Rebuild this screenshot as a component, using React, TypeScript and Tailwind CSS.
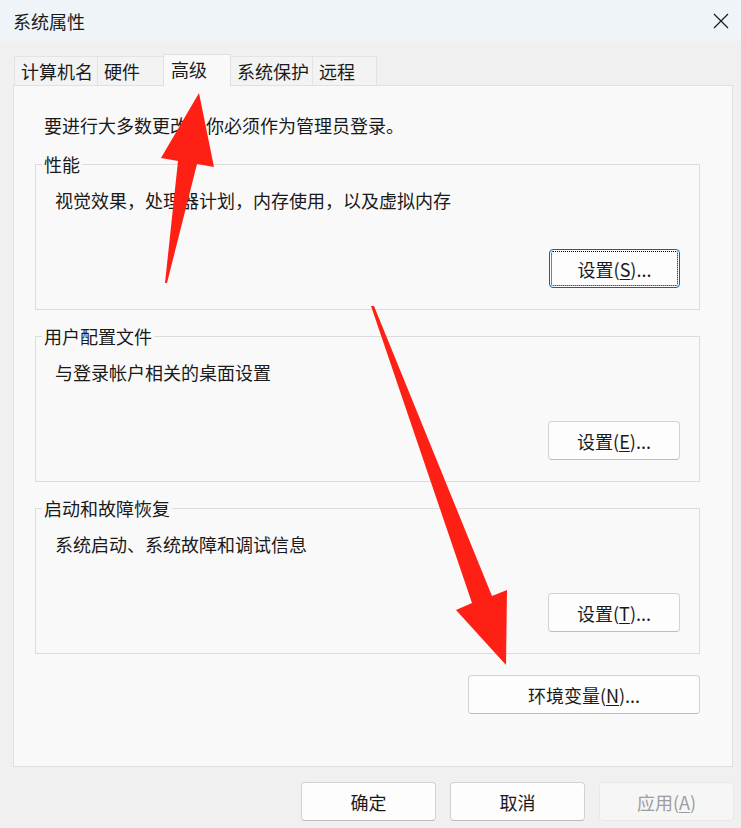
import type { ReactNode } from 'react'

function Btn({
  children,
  className,
  focused,
  disabled,
}: {
  children: ReactNode
  className: string
  focused?: boolean
  disabled?: boolean
}) {
  if (focused) {
    return (
      <button className={`h-[39px] rounded-[4px] border border-[#0067c0] bg-[#fdfdfd] p-px text-[18px] text-[#1a1a1a] ${className}`}>
        <div className="flex h-full w-full items-center justify-center rounded-[2px] border border-dotted border-black leading-[20px]">
          {children}
        </div>
      </button>
    )
  }
  return (
    <button
      disabled={disabled}
      className={`flex h-[39px] items-center justify-center rounded-[4px] border text-[18px] leading-[20px] ${
        disabled
          ? 'border-[#e8e8e8] bg-[#f6f6f6] text-[#9d9d9d]'
          : 'border-[#d2d2d2] border-b-[#bdbdbd] bg-[#fdfdfd] text-[#1a1a1a]'
      } ${className}`}
    >
      {children}
    </button>
  )
}

function Group({ title, desc, children }: { title: string; desc: string; children: ReactNode }) {
  return (
    <fieldset className="border border-[#dcdcdc] p-0">
      <legend className="ml-[6px] px-[2px] leading-[20px]">{title}</legend>
      <div className="px-[19px] pb-[21px]">
        <p className="mt-[16px] leading-[20px]">{desc}</p>
        <div className="mt-[39px] flex justify-end">{children}</div>
      </div>
    </fieldset>
  )
}

const tabs = [
  { label: '计算机名', w: 'w-[84px]' },
  { label: '硬件', w: 'w-[67px]' },
  { label: '高级', w: 'w-[68px]', active: true },
  { label: '系统保护', w: 'w-[83px]' },
  { label: '远程', w: 'w-[65px]' },
]

export default function App() {
  return (
    <div className="relative h-[828px] w-[741px] overflow-hidden bg-[#f0f0f0] text-[18px] text-[#1a1a1a] [font-family:'Noto_Sans_CJK_SC','Noto_Sans',sans-serif]">
      {/* title bar */}
      <div className="flex h-[41px] items-center justify-between bg-[#eef4f8] pl-[13px] pr-[12px]">
        <span className="leading-[20px]">系统属性</span>
        <svg width="16" height="16" viewBox="0 0 16 16" className="text-[#1a1a1a]">
          <path d="M1 1 L15 15 M15 1 L1 15" stroke="currentColor" strokeWidth="1.2" fill="none" />
        </svg>
      </div>

      <div className="px-[13px] pt-[13px]">
        {/* tabs */}
        <div className="flex items-end pl-px">
          {tabs.map((t) =>
            t.active ? (
              <div
                key={t.label}
                className={`relative z-10 -mb-px -mr-px flex h-[32px] items-center border border-b-0 border-[#e0e0e0] bg-[#f9f9f9] pl-[7px] pb-[3px] leading-[20px] ${t.w}`}
              >
                {t.label}
              </div>
            ) : (
              <div
                key={t.label}
                className={`-mr-px flex h-[29px] items-center border border-b-0 border-[#e3e3e3] bg-[#f3f3f3] pl-[6px] leading-[20px] ${t.w}`}
              >
                {t.label}
              </div>
            ),
          )}
        </div>

        {/* panel */}
        <div className="flex h-[682px] w-[720px] flex-col border border-[#e0e0e0] bg-[#f9f9f9] pl-[21px] pr-[32px] pt-[29px]">
          <p className="pl-[9px] leading-[20px]">要进行大多数更改，你必须作为管理员登录。</p>
          <div className="mt-[19px] flex flex-col gap-[16px]">
            <Group title="性能" desc="视觉效果，处理器计划，内存使用，以及虚拟内存">
              <Btn focused className="w-[131px]">
                设置(<span className="underline underline-offset-2">S</span>)...
              </Btn>
            </Group>
            <Group title="用户配置文件" desc="与登录帐户相关的桌面设置">
              <Btn className="w-[132px]">
                设置(<span className="underline underline-offset-2">E</span>)...
              </Btn>
            </Group>
            <Group title="启动和故障恢复" desc="系统启动、系统故障和调试信息">
              <Btn className="w-[132px]">
                设置(<span className="underline underline-offset-2">T</span>)...
              </Btn>
            </Group>
          </div>
          <div className="mt-[21px] flex justify-end">
            <Btn className="w-[232px]">
              环境变量(<span className="underline underline-offset-2">N</span>)...
            </Btn>
          </div>
        </div>
      </div>

      {/* dialog buttons */}
      <div className="mt-[15px] flex justify-end gap-[14px] pr-[7px]">
        <Btn className="w-[135px]">确定</Btn>
        <Btn className="w-[135px]">取消</Btn>
        <Btn disabled className="w-[135px]">
          应用(<span className="underline underline-offset-2">A</span>)
        </Btn>
      </div>

      {/* annotation arrows */}
      <svg className="pointer-events-none absolute left-0 top-0" width="741" height="828" viewBox="0 0 741 828">
        <polygon points="199,93 214,167 197,164 167,283 165,283 178,161 161,158" fill="#ff2015" />
        <polygon points="371,306 374,306 492,596 507,590 506,665 456,610 472,603" fill="#ff2015" />
      </svg>
    </div>
  )
}
